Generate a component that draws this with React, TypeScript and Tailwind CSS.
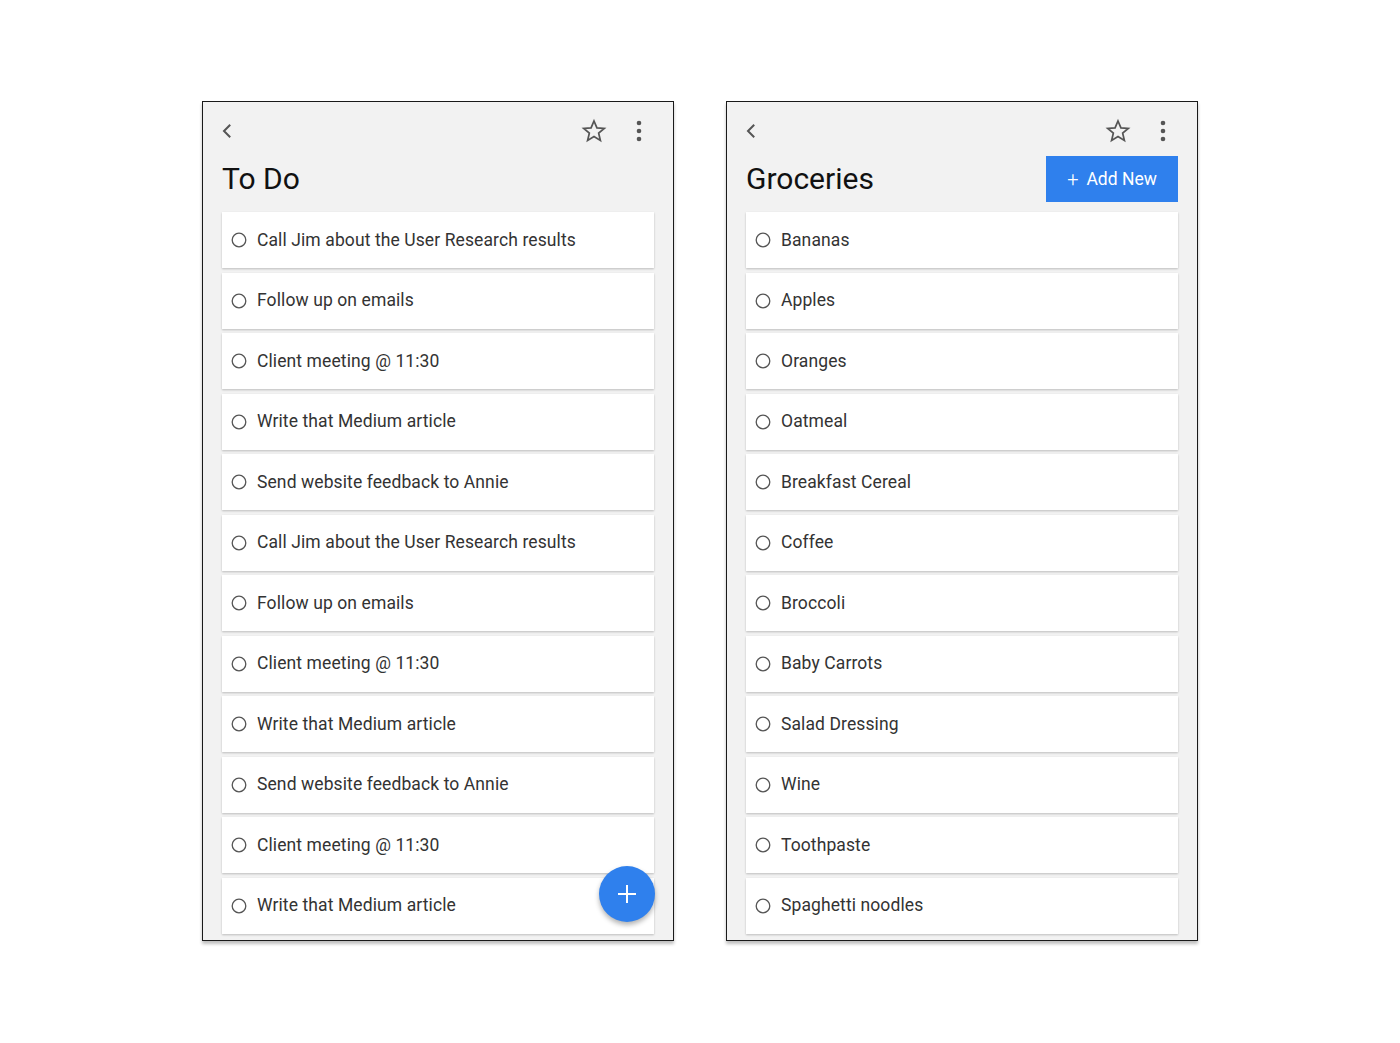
import React from "react";

const todo = [
  "Call Jim about the User Research results",
  "Follow up on emails",
  "Client meeting @ 11:30",
  "Write that Medium article",
  "Send website feedback to Annie",
  "Call Jim about the User Research results",
  "Follow up on emails",
  "Client meeting @ 11:30",
  "Write that Medium article",
  "Send website feedback to Annie",
  "Client meeting @ 11:30",
  "Write that Medium article",
];

const groceries = [
  "Bananas",
  "Apples",
  "Oranges",
  "Oatmeal",
  "Breakfast Cereal",
  "Coffee",
  "Broccoli",
  "Baby Carrots",
  "Salad Dressing",
  "Wine",
  "Toothpaste",
  "Spaghetti noodles",
];

function Chevron() {
  return (
    <svg width="12" height="16" viewBox="0 0 12 16" fill="none">
      <path d="M8.5 2.5 L3 8 L8.5 13.5" stroke="#555" strokeWidth="2" strokeLinecap="square" />
    </svg>
  );
}

function Star() {
  return (
    <svg width="26" height="26" viewBox="0 0 24 24" fill="none">
      <path
        d="M12 2.8 L14.7 9.1 L21.5 9.6 L16.3 14 L17.9 20.7 L12 17.1 L6.1 20.7 L7.7 14 L2.5 9.6 L9.3 9.1 Z"
        stroke="#555"
        strokeWidth="1.6"
        strokeLinejoin="miter"
      />
    </svg>
  );
}

function Dots() {
  return (
    <svg width="8" height="22" viewBox="0 0 8 22">
      <circle cx="4" cy="3" r="2.3" fill="#555" />
      <circle cx="4" cy="11" r="2.3" fill="#555" />
      <circle cx="4" cy="19" r="2.3" fill="#555" />
    </svg>
  );
}

function Item({ label }: { label: string }) {
  return (
    <div className="h-[56px] shrink-0 bg-white flex items-center pl-[9px] shadow-[0_1px_2px_rgba(0,0,0,0.22)]">
      <svg width="16" height="16" viewBox="0 0 16 16" className="shrink-0">
        <circle cx="8" cy="8" r="6.8" fill="none" stroke="#555" strokeWidth="1.3" />
      </svg>
      <span className="ml-[10px] text-[17.5px] text-[#333] tracking-[0.1px]">{label}</span>
    </div>
  );
}

function Panel({ title, items, addNew, fab }: { title: string; items: string[]; addNew?: boolean; fab?: boolean }) {
  return (
    <div className="relative w-[472px] h-[840px] bg-[#f2f2f2] border border-[#1a1a1a] shadow-[0_3px_3px_rgba(0,0,0,0.25)] overflow-hidden">
      <div className="flex items-center justify-between h-[58px] pl-[18px] pr-[30px]">
        <Chevron />
        <div className="flex items-center gap-[28px]">
          <Star />
          <Dots />
        </div>
      </div>
      <div className="flex items-start justify-between h-[52px] px-[19px]">
        <h1 className="text-[30px] text-[#111] leading-none mt-[4px]">{title}</h1>
        {addNew && (
          <button className="w-[132px] h-[46px] bg-[#2f80ed] text-white text-[17.5px] flex items-center justify-center gap-[8px] mt-[-4px]">
            <span className="text-[20px] leading-none font-light">+</span>
            <span>Add New</span>
          </button>
        )}
      </div>
      <div className="flex flex-col gap-[4.5px] px-[19px]">
        {items.map((it, i) => (
          <Item key={i} label={it} />
        ))}
      </div>
      {fab && (
        <div className="absolute left-[396px] top-[764px] w-[56px] h-[56px] rounded-full bg-[#2f80ed] flex items-center justify-center shadow-[0_3px_5px_rgba(0,0,0,0.3)]">
          <svg width="20" height="20" viewBox="0 0 20 20">
            <path d="M10 1 V19 M1 10 H19" stroke="white" strokeWidth="2" />
          </svg>
        </div>
      )}
    </div>
  );
}

export default function App() {
  return (
    <div
      className="w-[1400px] h-[1043px] bg-white flex justify-center pt-[101px] gap-[52px]"
      style={{ fontFamily: "Roboto, 'Noto Sans', sans-serif" }}
    >
      <Panel title="To Do" items={todo} fab />
      <Panel title="Groceries" items={groceries} addNew />
    </div>
  );
}
